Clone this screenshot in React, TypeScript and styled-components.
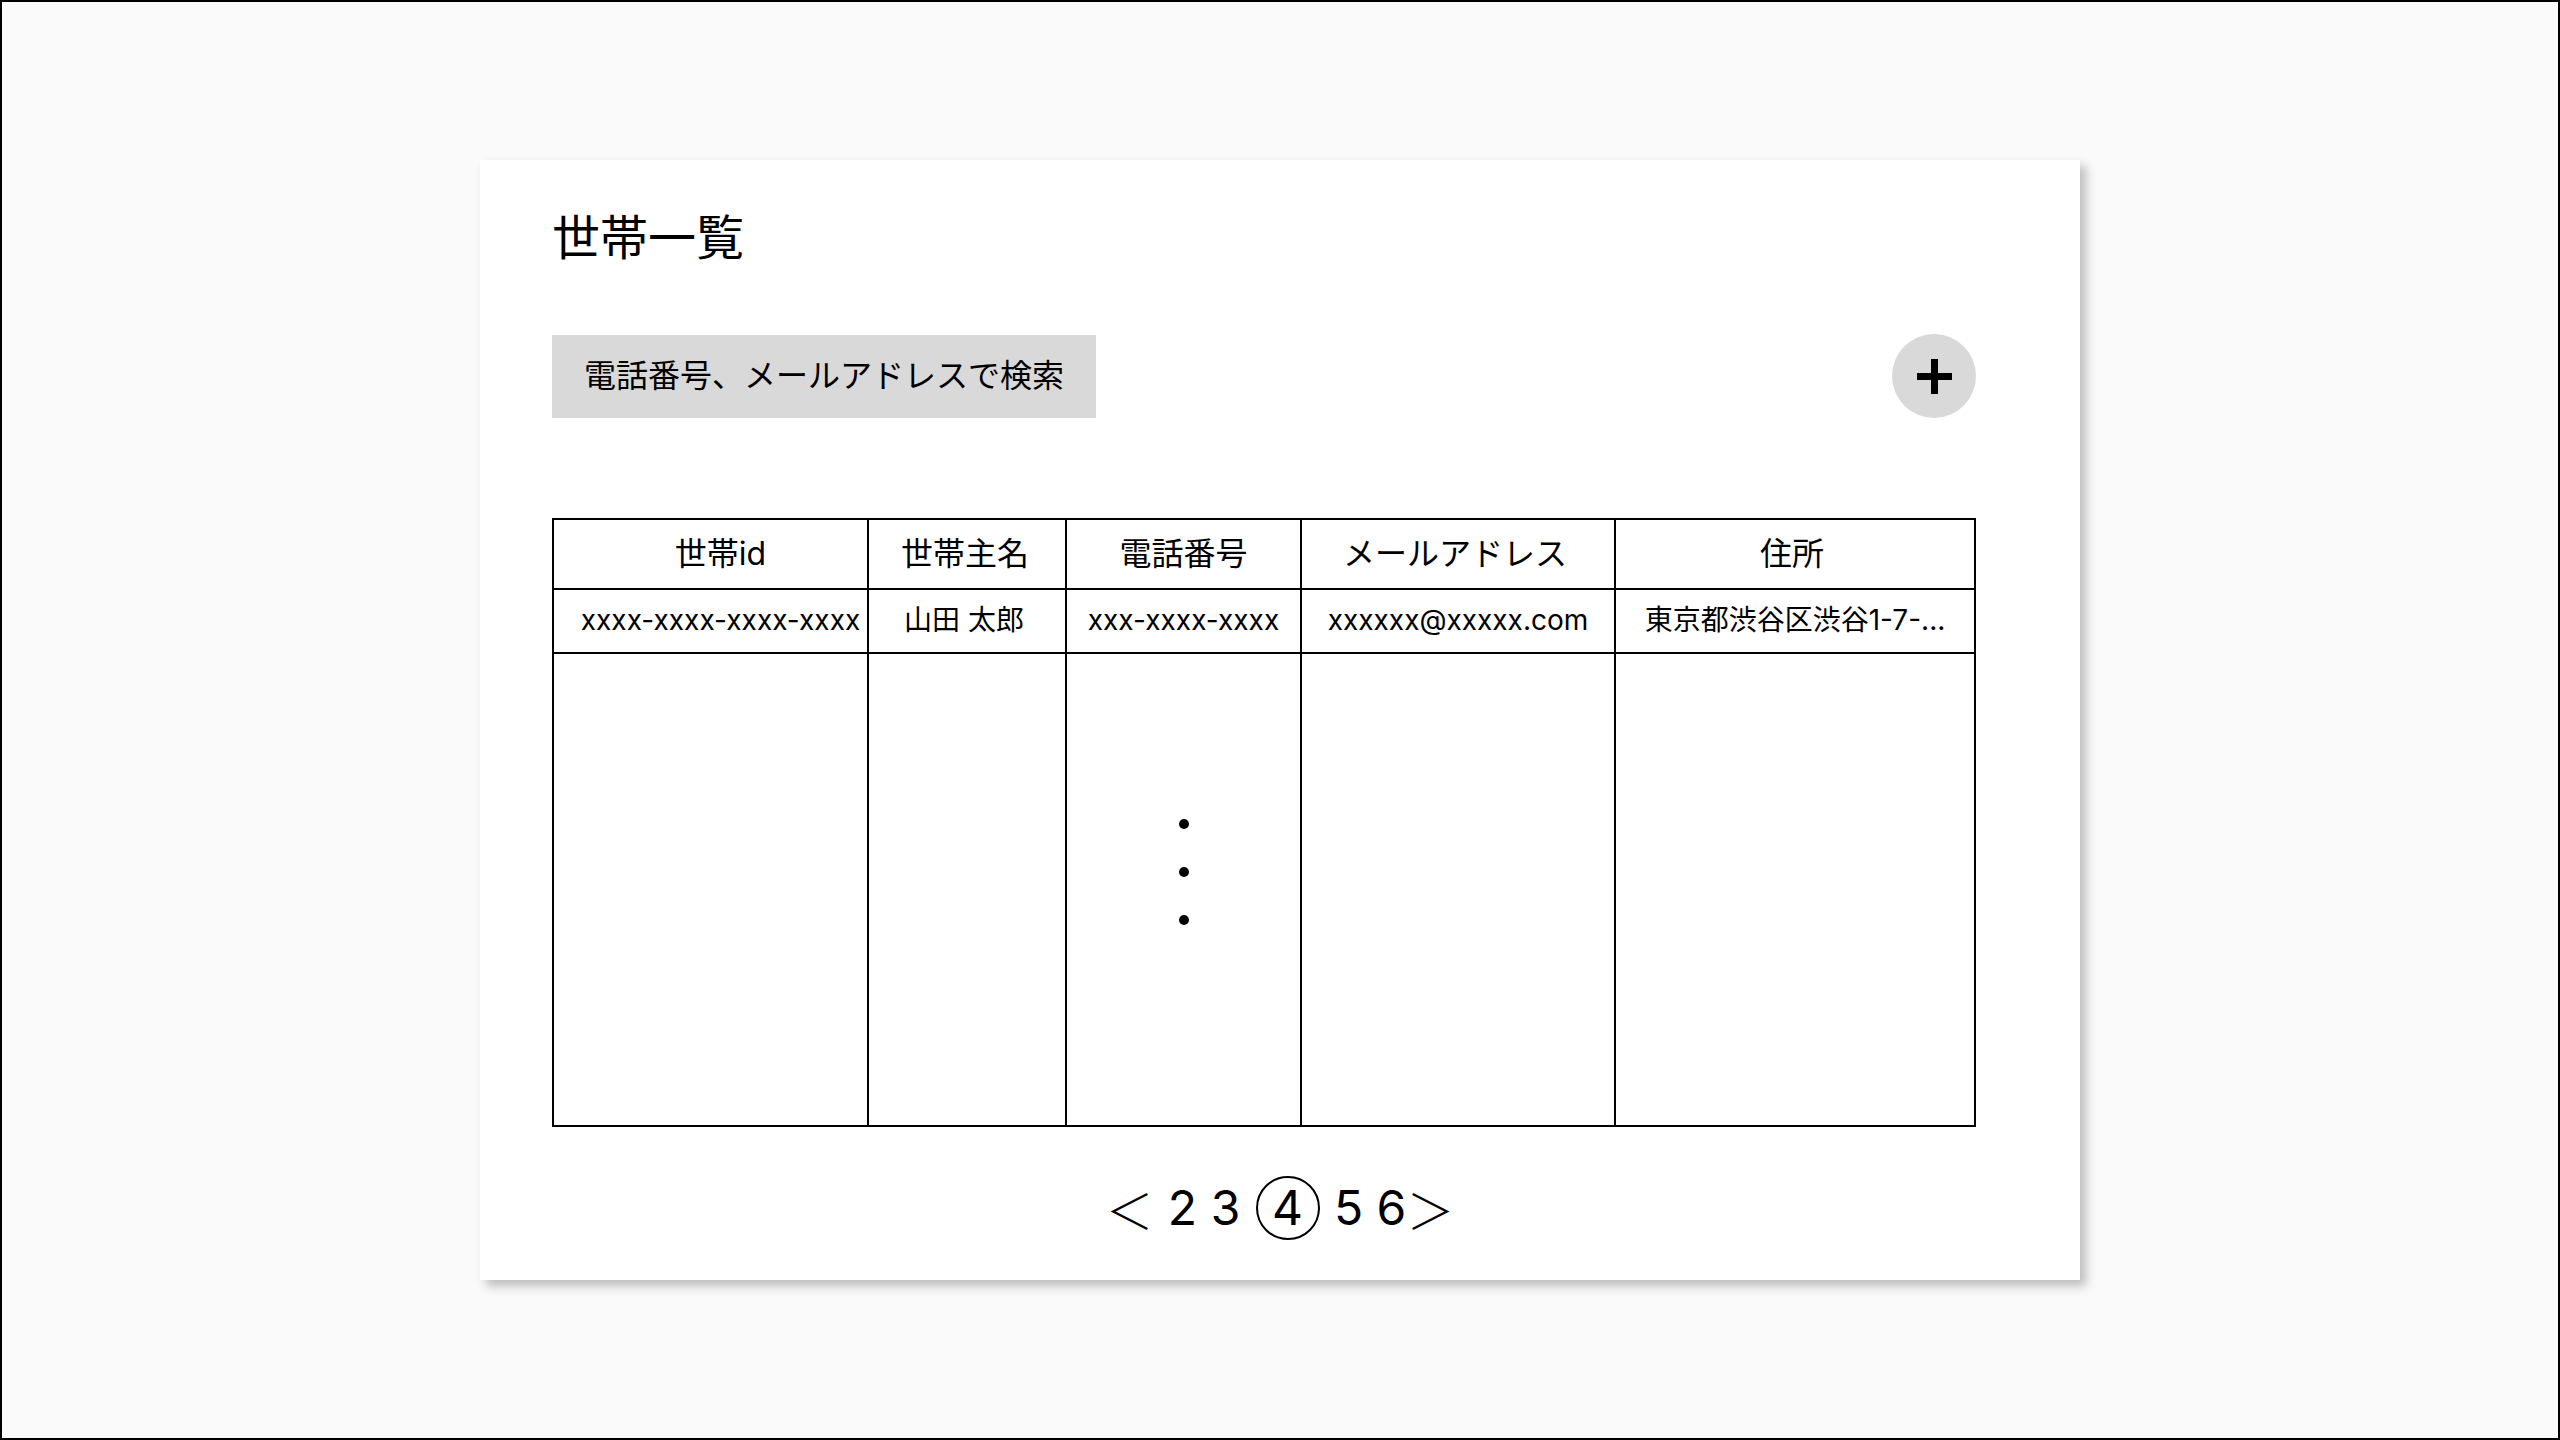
import React from "react";
import styled, { createGlobalStyle } from "styled-components";

const GlobalStyle = createGlobalStyle`
  *, *::before, *::after { box-sizing: border-box; }
  html, body { margin: 0; padding: 0; }
  body {
    font-family: Inter, "Noto Sans CJK JP", sans-serif;
    color: #000;
    background: #fafafa;
  }
`;

const Screen = styled.div`
  width: 2560px;
  height: 1440px;
  border: 2px solid #000;
  background: #fafafa;
  display: flex;
  align-items: center;
  justify-content: center;
`;

const Card = styled.section`
  width: 1600px;
  height: 1120px;
  background: #fff;
  box-shadow: 6px 6px 10px rgba(0, 0, 0, 0.25);
  padding: 49px 104px 0 72px;
  display: flex;
  flex-direction: column;
`;

const Title = styled.h1`
  margin: 0;
  font-size: 48px;
  line-height: 58px;
  font-weight: 400;
`;

const Toolbar = styled.div`
  margin-top: 67px;
  height: 84px;
  display: flex;
  align-items: center;
  justify-content: space-between;
`;

const SearchBox = styled.div`
  height: 83px;
  padding: 0 32px;
  background: #d9d9d9;
  display: flex;
  align-items: center;
  font-size: 32px;
  line-height: 40px;
  white-space: nowrap;
`;

const AddButton = styled.button`
  width: 84px;
  height: 84px;
  border-radius: 50%;
  border: none;
  padding: 0;
  background: #d9d9d9;
  display: flex;
  align-items: center;
  justify-content: center;
  cursor: pointer;
`;

const Grid = styled.div`
  margin-top: 100px;
  width: 1424px;
  border: 2px solid #000;
  display: grid;
  grid-template-columns: 315px 198px 235px 314px 358px;
  grid-template-rows: 70px 64px 471px;
`;

const Cell = styled.div<{ $last?: boolean; $size: number; $shift?: number }>`
  border-right: ${(p) => (p.$last ? "none" : "2px solid #000")};
  border-bottom: 2px solid #000;
  display: flex;
  align-items: center;
  justify-content: center;
  padding-left: ${(p) => Math.max(0, (p.$shift ?? 0) * 2)}px;
  padding-right: ${(p) => Math.max(0, -(p.$shift ?? 0) * 2)}px;
  font-size: ${(p) => p.$size}px;
  line-height: 1.2;
  white-space: nowrap;
  overflow: hidden;
`;

const BodyCell = styled.div<{ $last?: boolean }>`
  border-right: ${(p) => (p.$last ? "none" : "2px solid #000")};
  display: flex;
  flex-direction: column;
  align-items: center;
  padding-top: 165px;
  gap: 38px;
`;

const Dot = styled.span`
  width: 10px;
  height: 10px;
  border-radius: 50%;
  background: #000;
`;

const Pager = styled.nav`
  margin-top: 49px;
  margin-right: -32px;
  height: 64px;
  display: flex;
  align-items: center;
  justify-content: center;
  font-size: 48px;
  line-height: 1;
`;

const PageItem = styled.span<{ $w: number; $ml: number }>`
  width: ${(p) => p.$w}px;
  margin-left: ${(p) => p.$ml}px;
  display: flex;
  align-items: center;
  justify-content: center;
`;

const Chevron = styled(PageItem)`
  font-family: "Noto Sans CJK JP", sans-serif;
  font-weight: 300;
`;

const Current = styled.span<{ $ml: number }>`
  width: 64px;
  height: 64px;
  margin-left: ${(p) => p.$ml}px;
  border: 2.5px solid #000;
  border-radius: 50%;
  display: flex;
  align-items: center;
  justify-content: center;
`;

const headers = [
  { t: "世帯id", s: 10 },
  { t: "世帯主名", s: -2 },
  { t: "電話番号", s: 0 },
  { t: "メールアドレス", s: -3 },
  { t: "住所", s: -3 },
];
const row = [
  { t: "xxxx-xxxx-xxxx-xxxx", s: 10 },
  { t: "山田 太郎", s: -3 },
  { t: "xxx-xxxx-xxxx", s: 0 },
  { t: "xxxxxx@xxxxx.com", s: 0 },
  { t: "東京都渋谷区渋谷1-7-...", s: 0 },
];

export default function App() {
  return (
    <>
      <GlobalStyle />
      <Screen>
        <Card>
          <Title>世帯一覧</Title>
          <Toolbar>
            <SearchBox>電話番号、メールアドレスで検索</SearchBox>
            <AddButton aria-label="追加">
              <svg width="35" height="35" viewBox="0 0 35 35">
                <rect x="0" y="14" width="35" height="7" fill="#000" />
                <rect x="14" y="0" width="7" height="35" fill="#000" />
              </svg>
            </AddButton>
          </Toolbar>
          <Grid>
            {headers.map((h, i) => (
              <Cell key={h.t} $size={32} $last={i === 4} $shift={h.s}>
                {h.t}
              </Cell>
            ))}
            {row.map((v, i) => (
              <Cell key={v.t} $size={28} $last={i === 4} $shift={v.s}>
                {v.t}
              </Cell>
            ))}
            {headers.map((h, i) => (
              <BodyCell key={"b" + h.t} $last={i === 4}>
                {i === 2 && (
                  <>
                    <Dot />
                    <Dot />
                    <Dot />
                  </>
                )}
              </BodyCell>
            ))}
          </Grid>
          <Pager>
            <Chevron $w={40} $ml={0}>＜</Chevron>
            <PageItem $w={30} $ml={18}>2</PageItem>
            <PageItem $w={30} $ml={13}>3</PageItem>
            <Current $ml={15}>4</Current>
            <PageItem $w={30} $ml={14}>5</PageItem>
            <PageItem $w={30} $ml={13}>6</PageItem>
            <Chevron $w={40} $ml={4}>＞</Chevron>
          </Pager>
        </Card>
      </Screen>
    </>
  );
}
